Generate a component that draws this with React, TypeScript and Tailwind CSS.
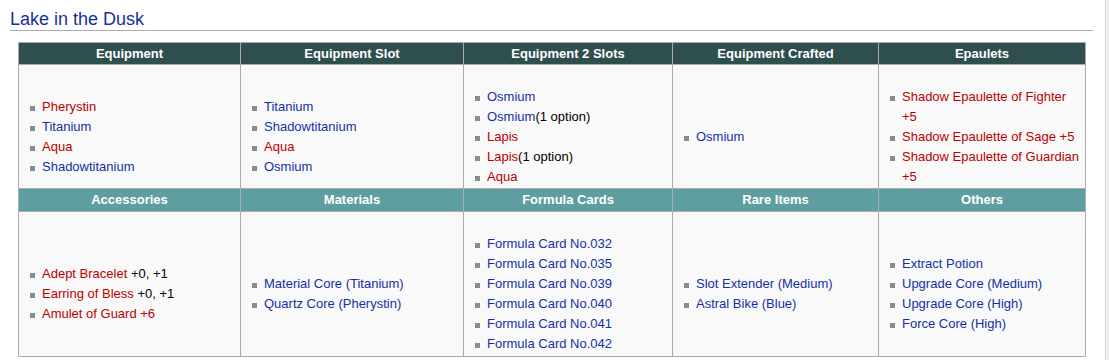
import React from 'react';

type Item = { label: string; kind: 'red' | 'blue'; extra?: string };

const r = (label: string, extra?: string): Item => ({ label, kind: 'red', extra });
const b = (label: string, extra?: string): Item => ({ label, kind: 'blue', extra });

const sections: { heads: string[]; dark: boolean; cells: Item[][] }[] = [
  {
    heads: ['Equipment', 'Equipment Slot', 'Equipment 2 Slots', 'Equipment Crafted', 'Epaulets'],
    dark: true,
    cells: [
      [r('Pherystin'), b('Titanium'), r('Aqua'), b('Shadowtitanium')],
      [b('Titanium'), b('Shadowtitanium'), r('Aqua'), b('Osmium')],
      [b('Osmium'), b('Osmium', '(1 option)'), r('Lapis'), r('Lapis', '(1 option)'), r('Aqua')],
      [b('Osmium')],
      [r('Shadow Epaulette of Fighter +5'), r('Shadow Epaulette of Sage +5'), r('Shadow Epaulette of Guardian +5')],
    ],
  },
  {
    heads: ['Accessories', 'Materials', 'Formula Cards', 'Rare Items', 'Others'],
    dark: false,
    cells: [
      [r('Adept Bracelet', ' +0, +1'), r('Earring of Bless', ' +0, +1'), r('Amulet of Guard +6')],
      [b('Material Core (Titanium)'), b('Quartz Core (Pherystin)')],
      [
        b('Formula Card No.032'),
        b('Formula Card No.035'),
        b('Formula Card No.039'),
        b('Formula Card No.040'),
        b('Formula Card No.041'),
        b('Formula Card No.042'),
      ],
      [b('Slot Extender (Medium)'), b('Astral Bike (Blue)')],
      [b('Extract Potion'), b('Upgrade Core (Medium)'), b('Upgrade Core (High)'), b('Force Core (High)')],
    ],
  },
];

const ItemList = ({ items }: { items: Item[] }) => (
  <div className="w-full">
    {/* wiki cells open with an empty line before the list */}
    <div className="h-5" />
    <ul>
      {items.map((it, i) => (
        <li key={i} className="flex items-start leading-5">
          <span className="w-[5px] h-[5px] mt-[9px] mr-[7px] bg-[#7d8f9c] shrink-0" />
          <span className="flex-1">
            <a className={it.kind === 'red' ? 'text-[#ba0000]' : 'text-[#1530a6]'}>{it.label}</a>
            {it.extra && <span className="text-black">{it.extra}</span>}
          </span>
        </li>
      ))}
    </ul>
  </div>
);

export default function App() {
  return (
    <div className="flex h-[360px] bg-white text-[13px] font-['Liberation_Sans',Arial,sans-serif]">
      <div className="flex-1 pl-[10px] pr-[12px]">
        <h2 className="mt-[8px] leading-[22px] text-[18px] text-[#17309c] border-b border-[#aaaaaa]">
          Lake in the Dusk
        </h2>

        <div className="mt-[11px] ml-[8px] w-[1068px] grid grid-cols-[222px_223px_209px_206px_207px] grid-rows-[22px_124px_23px_145px] border-l border-t border-[#aaaaaa]">
          {sections.map((sec, si) => (
            <React.Fragment key={si}>
              {sec.heads.map((h) => (
                <div
                  key={h}
                  className={`flex items-center justify-center font-bold text-white border-r border-b border-[#aaaaaa] ${
                    sec.dark ? 'bg-[#2f4f4f]' : 'bg-[#5f9ea0]'
                  }`}
                >
                  {h}
                </div>
              ))}
              {sec.cells.map((items, ci) => (
                <div
                  key={ci}
                  className="flex items-center pl-[11px] pr-[4px] bg-[#f9f9f9] border-r border-b border-[#aaaaaa]"
                >
                  <ItemList items={items} />
                </div>
              ))}
            </React.Fragment>
          ))}
        </div>
      </div>

      {/* right page edge */}
      <div className="w-[4px] h-full border-l border-[#d8d8d8] bg-[#f0f0f0]" />
    </div>
  );
}
